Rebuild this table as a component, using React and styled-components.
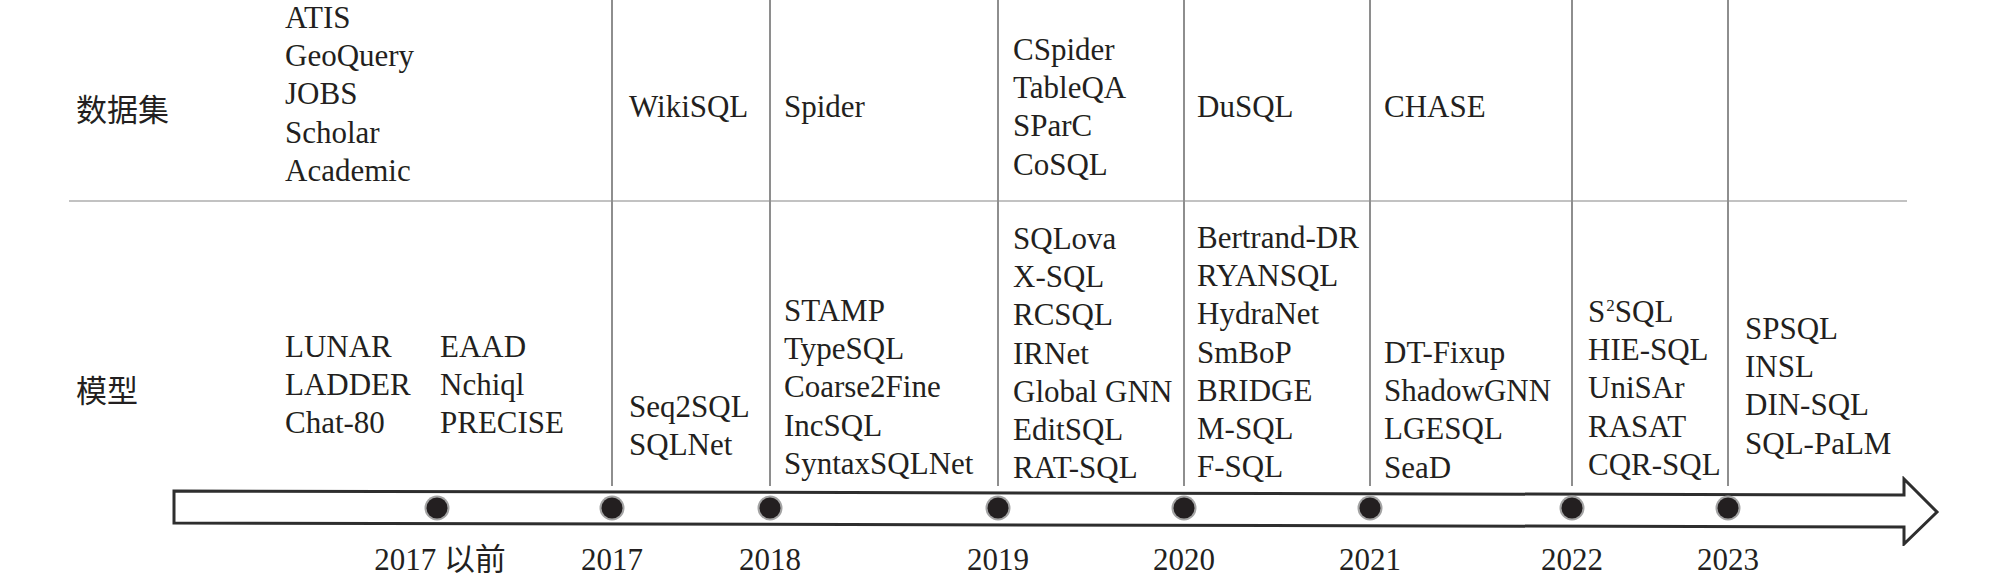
import styled, { createGlobalStyle } from 'styled-components'

const GlobalStyle = createGlobalStyle`
  html, body {
    margin: 0;
    padding: 0;
    background: #ffffff;
  }
  body {
    font-family: 'Liberation Serif', 'Noto Sans CJK SC', serif;
    color: #231f20;
  }
`

const LABEL_WIDTH = 200
const TABLE_LEFT = 69

const columns = [
    {
        width: 342,
        pad: 16,
        year: '2017 以前',
        datasets: ['ATIS', 'GeoQuery', 'JOBS', 'Scholar', 'Academic'],
        dataTop: -1,
        models: [
            ['LUNAR', 'LADDER', 'Chat-80'],
            ['EAAD', 'Nchiql', 'PRECISE'],
        ],
        modelTop: 126,
    },
    {
        width: 158,
        pad: 16,
        year: '2017',
        datasets: ['WikiSQL'],
        models: [['Seq2SQL', 'SQLNet']],
        modelTop: 186,
    },
    {
        width: 228,
        pad: 13,
        year: '2018',
        datasets: ['Spider'],
        models: [['STAMP', 'TypeSQL', 'Coarse2Fine', 'IncSQL', 'SyntaxSQLNet']],
        modelTop: 90,
    },
    {
        width: 186,
        pad: 14,
        year: '2019',
        datasets: ['CSpider', 'TableQA', 'SParC', 'CoSQL'],
        dataTop: 31,
        models: [
            [
                'SQLova',
                'X-SQL',
                'RCSQL',
                'IRNet',
                'Global GNN',
                'EditSQL',
                'RAT-SQL',
            ],
        ],
        modelTop: 18,
    },
    {
        width: 186,
        pad: 12,
        year: '2020',
        datasets: ['DuSQL'],
        models: [
            [
                'Bertrand-DR',
                'RYANSQL',
                'HydraNet',
                'SmBoP',
                'BRIDGE',
                'M-SQL',
                'F-SQL',
            ],
        ],
        modelTop: 17,
    },
    {
        width: 202,
        pad: 13,
        year: '2021',
        datasets: ['CHASE'],
        models: [['DT-Fixup', 'ShadowGNN', 'LGESQL', 'SeaD']],
        modelTop: 132,
    },
    {
        width: 156,
        pad: 15,
        year: '2022',
        datasets: [],
        models: [['S2SQL', 'HIE-SQL', 'UniSAr', 'RASAT', 'CQR-SQL']],
        modelTop: 91,
    },
    {
        width: 180,
        pad: 16,
        year: '2023',
        datasets: [],
        models: [['SPSQL', 'INSL', 'DIN-SQL', 'SQL-PaLM']],
        modelTop: 108,
    },
]

const Page = styled.div`
    width: 2008px;
    height: 581px;
    overflow: hidden;
    background: #ffffff;
`

const Table = styled.div`
    display: flex;
    margin-left: ${TABLE_LEFT}px;
`

const Column = styled.div`
    display: flex;
    flex-direction: column;
    flex: none;
    width: ${(props) => props.$width}px;
    box-sizing: border-box;
    border-left: ${(props) => (props.$line ? '2px solid #8e8e8e' : 'none')};
`

const DataCell = styled.div`
    height: 202px;
    box-sizing: border-box;
    border-bottom: 2px solid #c2c2c2;
    padding-left: ${(props) => props.$pad}px;
`

const ModelCell = styled.div`
    height: 284px;
    box-sizing: border-box;
    padding-left: ${(props) => props.$pad}px;
    display: flex;
    align-items: flex-start;
`

const Stack = styled.div`
    display: flex;
    flex-direction: column;
    margin-top: ${(props) => props.$top}px;
    width: ${(props) => (props.$width ? `${props.$width}px` : 'auto')};
    font-size: 31px;
    line-height: 38.2px;
    white-space: nowrap;
`

const Sup = styled.sup`
    font-size: 17px;
    line-height: 0;
    vertical-align: 11px;
    margin-left: 1px;
`

const Arrow = styled.svg`
    display: block;
    margin-top: -10px;
`

const YearRow = styled.div`
    display: flex;
    margin-left: ${TABLE_LEFT}px;
    font-size: 31px;
    line-height: 28px;
    white-space: nowrap;
`

const YearCell = styled.div`
    flex: none;
    width: ${(props) => props.$width}px;
    text-align: ${(props) => (props.$center ? 'center' : 'left')};
`

const Year = styled.span`
    display: inline-block;
    transform: ${(props) =>
        props.$center ? 'none' : 'translateX(calc(-50% + 1px))'};
`

function Name({ text }) {
    if (text === 'S2SQL')
        return (
            <span>
                S<Sup>2</Sup>SQL
            </span>
        )
    return <span>{text}</span>
}

function Timeline() {
    const dots = [TABLE_LEFT + LABEL_WIDTH + columns[0].width / 2 - 3]
    let left = TABLE_LEFT + LABEL_WIDTH
    columns.forEach((col, index) => {
        if (index > 0) dots.push(left + 1)
        left += col.width
    })

    return (
        <Arrow width="2008" height="70" viewBox="0 0 2008 70">
            <polygon
                points="174,15 1904,19 1904,3 1937,36 1904,68 1904,51 174,47"
                fill="#ffffff"
                stroke="#2e2e2e"
                strokeWidth="3"
                strokeLinejoin="miter"
            />
            {dots.map((x) => (
                <g key={x}>
                    <circle cx={x} cy="32" r="12.5" fill="#a3a3a3" />
                    <circle cx={x} cy="32" r="10.5" fill="#231f20" />
                </g>
            ))}
        </Arrow>
    )
}

export default function App() {
    return (
        <Page>
            <GlobalStyle />
            <Table>
                <Column $width={LABEL_WIDTH}>
                    <DataCell $pad={7}>
                        <Stack $top={92}>数据集</Stack>
                    </DataCell>
                    <ModelCell $pad={7}>
                        <Stack $top={171}>模型</Stack>
                    </ModelCell>
                </Column>
                {columns.map((col, index) => (
                    <Column key={col.year} $width={col.width} $line={index > 0}>
                        <DataCell $pad={col.pad}>
                            {col.datasets.length > 0 && (
                                <Stack $top={col.dataTop ?? 88}>
                                    {col.datasets.map((name) => (
                                        <Name key={name} text={name} />
                                    ))}
                                </Stack>
                            )}
                        </DataCell>
                        <ModelCell $pad={col.pad}>
                            {col.models.map((group, i) => (
                                <Stack
                                    key={i}
                                    $top={col.modelTop}
                                    $width={
                                        col.models.length > 1 && i === 0
                                            ? 155
                                            : null
                                    }
                                >
                                    {group.map((name) => (
                                        <Name key={name} text={name} />
                                    ))}
                                </Stack>
                            ))}
                        </ModelCell>
                    </Column>
                ))}
            </Table>
            <Timeline />
            <YearRow>
                <YearCell $width={LABEL_WIDTH} />
                {columns.map((col, index) => (
                    <YearCell
                        key={col.year}
                        $width={col.width}
                        $center={index === 0}
                    >
                        <Year $center={index === 0}>{col.year}</Year>
                    </YearCell>
                ))}
            </YearRow>
        </Page>
    )
}
